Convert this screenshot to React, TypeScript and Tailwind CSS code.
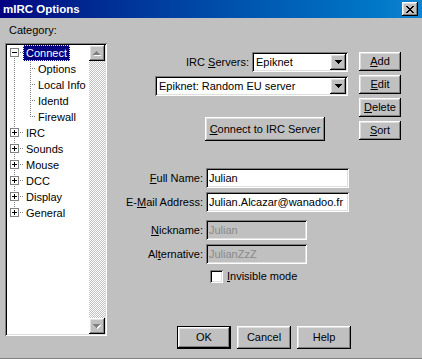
import React from "react"

const raised =
  "shadow-[inset_-1px_-1px_0_#000,inset_1px_1px_0_#fff,inset_-2px_-2px_0_#808080,inset_2px_2px_0_#dfdfdf]"
const sunken =
  "shadow-[inset_1px_1px_0_#808080,inset_-1px_-1px_0_#fff,inset_2px_2px_0_#000,inset_-2px_-2px_0_#dfdfdf]"

type Row = { label: string; level: 0 | 1; box?: "plus" | "minus"; selected?: boolean }

const rows: Row[] = [
  { label: "Connect", level: 0, box: "minus", selected: true },
  { label: "Options", level: 1 },
  { label: "Local Info", level: 1 },
  { label: "Identd", level: 1 },
  { label: "Firewall", level: 1 },
  { label: "IRC", level: 0, box: "plus" },
  { label: "Sounds", level: 0, box: "plus" },
  { label: "Mouse", level: 0, box: "plus" },
  { label: "DCC", level: 0, box: "plus" },
  { label: "Display", level: 0, box: "plus" },
  { label: "General", level: 0, box: "plus" },
]

function Btn({ children, className = "" }: { children: React.ReactNode; className?: string }) {
  return (
    <div className={`flex items-center justify-center bg-[#c0c0c0] ${raised} ${className}`}>
      {children}
    </div>
  )
}

function DownTriangle() {
  return (
    <svg width="7" height="4" viewBox="0 0 7 4" shapeRendering="crispEdges">
      <path d="M0 0h7v1H0zM1 1h5v1H1zM2 2h3v1H2zM3 3h1v1H3z" fill="#000" />
    </svg>
  )
}

function DisabledArrow({ up }: { up?: boolean }) {
  const d = up
    ? "M3 0h1v1H3zM2 1h3v1H2zM1 2h5v1H1zM0 3h7v1H0z"
    : "M0 0h7v1H0zM1 1h5v1H1zM2 2h3v1H2zM3 3h1v1H3z"
  return (
    <svg width="8" height="5" viewBox="0 0 8 5" shapeRendering="crispEdges">
      <path d={d} fill="#fff" transform="translate(1 1)" />
      <path d={d} fill="#808080" />
    </svg>
  )
}

function Combo({ value, className = "" }: { value: string; className?: string }) {
  return (
    <div className={`h-[20px] bg-white p-[2px] flex items-center ${sunken} ${className}`}>
      <span className="flex-1 pl-[2px] whitespace-nowrap">{value}</span>
      <Btn className="w-[16px] h-[16px]">
        <DownTriangle />
      </Btn>
    </div>
  )
}

function Field({
  label,
  value,
  width,
  disabled,
}: {
  label: React.ReactNode
  value: string
  width: string
  disabled?: boolean
}) {
  return (
    <div className="flex items-center">
      <div className="w-[93px] text-right whitespace-nowrap">{label}</div>
      <div
        className={`ml-[3px] h-[20px] px-[3px] flex items-center ${sunken} ${width} ${
          disabled ? "bg-[#c0c0c0] text-[#8a8a8a]" : "bg-white"
        }`}
      >
        {value}
      </div>
    </div>
  )
}

function TreeLines() {
  const roots = [0, 5, 6, 7, 8, 9, 10]
  const dots: [number, number][] = []
  roots.forEach((r, i) => {
    const c = 16 * r + 7
    dots.push([13, c], [15, c])
    if (i > 0) {
      const p = 16 * roots[i - 1] + 7
      for (let y = p + 6; y <= c - 6; y += 2) dots.push([7, y])
    }
  })
  for (let y = 17; y <= 71; y += 2) dots.push([23, y])
  for (let r = 1; r <= 4; r++) {
    const c = 16 * r + 7
    dots.push([25, c], [27, c])
  }
  return (
    <svg
      className="absolute left-0 top-0 pointer-events-none"
      width="40"
      height="190"
      shapeRendering="crispEdges"
    >
      {dots.map(([x, y], i) => (
        <rect key={i} x={x} y={y} width="1" height="1" fill="#808080" />
      ))}
      {roots.map((r) => {
        const c = 16 * r + 7
        const plus = r !== 0
        return (
          <g key={r}>
            <rect x="3.5" y={c - 3.5} width="8" height="8" fill="#fff" stroke="#808080" />
            <path d={`M5 ${c}h5v1H5z${plus ? `M7 ${c - 2}h1v5H7z` : ""}`} fill="#000" />
          </g>
        )
      })}
    </svg>
  )
}

export default function App() {
  return (
    <div className="w-[422px] h-[359px] bg-[#c0c0c0] flex flex-col font-['Liberation_Sans',Arial,sans-serif] text-[11px] leading-[13px] text-black overflow-hidden border-b border-[#808080] select-none">
      {/* title bar */}
      <div className="h-[18px] shrink-0 flex items-center justify-between pl-[3px] pr-[4px] bg-linear-to-r from-[#000080] to-[#1084d0]">
        <span className="text-white font-bold text-[11.5px]">mIRC Options</span>
        <Btn className="w-[16px] h-[14px]">
          <svg width="8" height="7" viewBox="0 0 8 7" shapeRendering="crispEdges">
            <path
              d="M0 0h2v1H0zM6 0h2v1H6zM1 1h2v1H1zM5 1h2v1H5zM2 2h4v1H2zM3 3h2v1H3zM2 4h4v1H2zM1 5h2v1H1zM5 5h2v1H5zM0 6h2v1H0zM6 6h2v1H6z"
              fill="#000"
            />
          </svg>
        </Btn>
      </div>

      <div className="flex flex-1">
        {/* category tree */}
        <div className="w-[110px] pl-[5px] pt-[6px] flex flex-col">
          <span className="ml-[4px]">Category:</span>
          <div className={`mt-[6px] w-[102px] h-[293px] bg-white p-[2px] flex ${sunken}`}>
            <div className="relative flex-1 flex flex-col">
              <TreeLines />
              {rows.map((r) => (
                <div
                  key={r.label}
                  className={`h-[16px] flex items-center ${r.level === 0 ? "pl-[16px]" : "pl-[28px]"}`}
                >
                  <span
                    className={`h-[16px] flex items-center px-[2px] border whitespace-nowrap ${
                      r.selected
                        ? "bg-[#000080] text-white border-dotted border-[#ffff80]"
                        : "border-transparent"
                    }`}
                  >
                    {r.label}
                  </span>
                </div>
              ))}
            </div>
            <div className="w-[16px] flex flex-col">
              <Btn className="w-[16px] h-[16px]">
                <DisabledArrow up />
              </Btn>
              <div className="flex-1 bg-[image:repeating-conic-gradient(#c0c0c0_0%_25%,#ffffff_0%_50%)] bg-[length:2px_2px]" />
              <Btn className="w-[16px] h-[16px]">
                <DisabledArrow />
              </Btn>
            </div>
          </div>
        </div>

        {/* settings */}
        <div className="flex-1 flex flex-col">
          <div className="mt-[34px] flex">
            <div className="w-[238px] flex flex-col">
              <div className="h-[20px] flex items-center justify-end">
                <span className="whitespace-nowrap">
                  IRC <u>S</u>ervers:
                </span>
                <Combo value="Epiknet" className="ml-[3px] w-[96px]" />
              </div>
              <Combo value="Epiknet: Random EU server" className="mt-[4px] self-end w-[193px]" />
              <Btn className="mt-[21px] ml-[95px] w-[120px] h-[24px]">
                <span>
                  <u>C</u>onnect to IRC Server
                </span>
              </Btn>
            </div>
            <div className="ml-[11px] w-[42px] flex flex-col gap-[4px]">
              <Btn className="h-[19px]">
                <span>
                  <u>A</u>dd
                </span>
              </Btn>
              <Btn className="h-[19px]">
                <span>
                  <u>E</u>dit
                </span>
              </Btn>
              <Btn className="h-[19px]">
                <span>
                  <u>D</u>elete
                </span>
              </Btn>
              <Btn className="h-[19px]">
                <span>
                  <u>S</u>ort
                </span>
              </Btn>
            </div>
          </div>

          <div className="mt-[27px] flex flex-col">
            <Field
              label={
                <>
                  <u>F</u>ull Name:
                </>
              }
              value="Julian"
              width="w-[143px]"
            />
            <div className="mt-[4px]">
              <Field
                label={
                  <>
                    E-<u>M</u>ail Address:
                  </>
                }
                value="Julian.Alcazar@wanadoo.fr"
                width="w-[143px]"
              />
            </div>
            <div className="mt-[8px]">
              <Field
                label={
                  <>
                    <u>N</u>ickname:
                  </>
                }
                value="Julian"
                width="w-[101px]"
                disabled
              />
            </div>
            <div className="mt-[4px]">
              <Field
                label={
                  <>
                    Al<u>t</u>ernative:
                  </>
                }
                value="JulianZzZ"
                width="w-[101px]"
                disabled
              />
            </div>
          </div>

          <div className="mt-[6px] ml-[100px] flex items-center">
            <div className={`w-[13px] h-[13px] bg-white ${sunken}`} />
            <span className="ml-[4px]">
              <u>I</u>nvisible mode
            </span>
          </div>

          <div className="mt-[43px] ml-[67px] flex gap-[6px]">
            <Btn className="w-[54px] h-[23px] border border-black">OK</Btn>
            <Btn className="w-[54px] h-[23px]">Cancel</Btn>
            <Btn className="w-[54px] h-[23px]">Help</Btn>
          </div>
        </div>
      </div>
    </div>
  )
}
